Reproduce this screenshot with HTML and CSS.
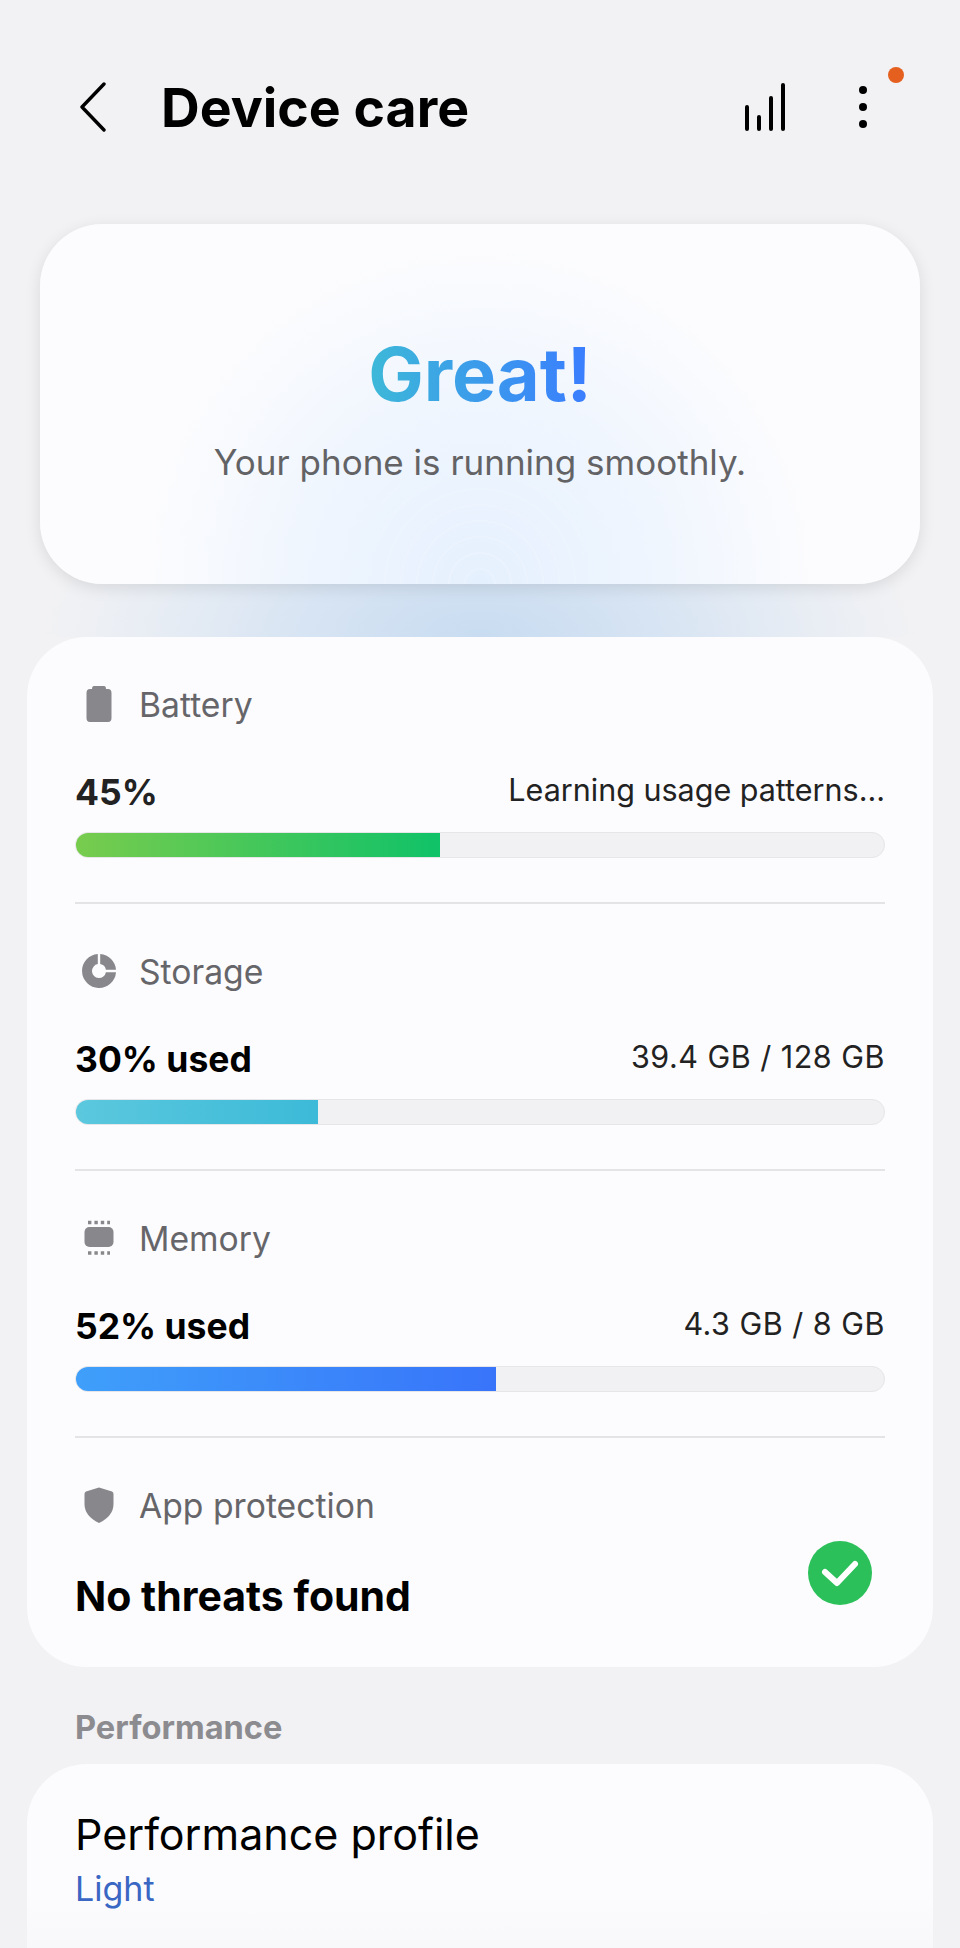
FILE: index.html
```html
<!DOCTYPE html>
<html lang="en">
<head>
  <meta charset="UTF-8" />
  <meta name="viewport" content="width=device-width, initial-scale=1.0"/>
  <title>Device care</title>
  <link rel="stylesheet" href="styles.css">
</head>
<body>

  <header class="top-bar">
    <svg class="back-icon" width="32" height="50" viewBox="0 0 32 50">
      <path d="M25 2 L3 25 L25 48" fill="none" stroke="#000" stroke-width="3.4" stroke-linecap="round" stroke-linejoin="round"/>
    </svg>
    <h1>Device care</h1>
    <svg class="bars-icon" width="40" height="48" viewBox="0 0 40 48">
      <path d="M2 24 V46 M14 34 V46 M26 15 V46 M38 2 V46" fill="none" stroke="#000" stroke-width="4" stroke-linecap="round"/>
    </svg>
    <div class="more-btn">
      <span class="dot"></span><span class="dot"></span><span class="dot"></span>
      <span class="badge"></span>
    </div>
  </header>

  <section class="hero-wrap">
    <div class="hero">
      <div class="great">Great!</div>
      <p>Your phone is running smoothly.</p>
    </div>
  </section>

  <main class="card status-card">

    <section class="row">
      <div class="row-title">
        <span class="row-icon">
          <svg width="26" height="36" viewBox="0 0 26 36"><path d="M8 0 H18 Q20 0 20 3 H22 Q25.5 3 25.5 7 V32 Q25.5 36 22 36 H4 Q0.5 36 0.5 32 V7 Q0.5 3 4 3 H6 Q6 0 8 0 Z" fill="#88888c"/></svg>
        </span>
        Battery
      </div>
      <div class="row-values">
        <strong class="dim">45%</strong>
        <span>Learning usage patterns...</span>
      </div>
      <div class="track"><div class="fill fill-battery" style="width: 45%"></div></div>
    </section>

    <section class="row">
      <div class="row-title">
        <span class="row-icon">
          <svg width="34" height="34" viewBox="0 0 34 34">
            <path d="M15.8 0 A17 17 0 1 0 34 18.2 H23.9 A7 7 0 1 1 15.8 10.1 Z" fill="#88888c"/>
            <path d="M18.2 0 A17 17 0 0 1 34 15.8 H23.9 A7 7 0 0 0 18.2 10.1 Z" fill="#88888c"/>
          </svg>
        </span>
        Storage
      </div>
      <div class="row-values">
        <strong>30% used</strong>
        <span class="amount">39.4 GB / 128 GB</span>
      </div>
      <div class="track"><div class="fill fill-storage" style="width: 30%"></div></div>
    </section>

    <section class="row">
      <div class="row-title">
        <span class="row-icon">
          <svg width="30" height="36" viewBox="0 0 30 36">
            <rect x="0.5" y="7" width="29" height="20" rx="5" fill="#88888c"/>
            <path d="M4 2.5 H26 M4 33 H26" stroke="#88888c" stroke-width="3.4" stroke-dasharray="3.4 3" fill="none"/>
          </svg>
        </span>
        Memory
      </div>
      <div class="row-values">
        <strong>52% used</strong>
        <span class="amount">4.3 GB / 8 GB</span>
      </div>
      <div class="track"><div class="fill fill-memory" style="width: 52%"></div></div>
    </section>

    <section class="row row-last">
      <div class="row-title">
        <span class="row-icon">
          <svg width="30" height="36" viewBox="0 0 30 36"><path d="M15 0.5 L28 4.5 Q29.5 5 29.5 7 V17 Q29.5 29 15 36 Q0.5 29 0.5 17 V7 Q0.5 5 2 4.5 Z" fill="#88888c"/></svg>
        </span>
        App protection
      </div>
      <div class="threats">
        <strong>No threats found</strong>
        <svg class="check" width="64" height="64" viewBox="0 0 64 64">
          <circle cx="32" cy="32" r="32" fill="#2bc05a"/>
          <path d="M17 31 L29 42 L47 23" fill="none" stroke="#fff" stroke-width="6" stroke-linecap="round" stroke-linejoin="round"/>
        </svg>
      </div>
    </section>

  </main>

  <h2 class="section-label">Performance</h2>

  <section class="card profile-card">
    <div class="profile-name">Performance profile</div>
    <div class="profile-value">Light</div>
  </section>

</body>
</html>
```

FILE: styles.css
```css
html, body {
  height: 1948px;
  overflow: hidden;
}

body {
  margin: 0;
  font-family: Inter, "Open Sans", sans-serif;
  background: #f2f2f4;
  color: #000;
}

.top-bar {
  display: flex;
  align-items: center;
  height: 122px;
  padding: 46px 65px 0 79px;
}

.back-icon {
  flex: none;
}

.top-bar h1 {
  flex: 1;
  margin: 0 0 0 50px;
  font-size: 53.6px;
  font-weight: 700;
}

.bars-icon {
  flex: none;
  margin-right: 74px;
}

.more-btn {
  display: flex;
  flex-direction: column;
  gap: 9px;
  width: 36px;
  position: relative;
}

.dot {
  width: 8px;
  height: 8px;
  border-radius: 50%;
  background: #000;
}

.badge {
  position: absolute;
  top: -19px;
  left: 29px;
  width: 16px;
  height: 16px;
  border-radius: 50%;
  background: #e5601e;
}

.hero-wrap {
  padding: 56px 40px 53px;
  background:
    radial-gradient(ellipse 440px 200px at 50% 100%, #c8dcf1 0%, #d7e4f3 40%, #e8edf4 75%, #f2f2f4 100%);
}

.hero {
  height: 360px;
  box-sizing: border-box;
  padding-top: 114px;
  border-radius: 62px;
  text-align: center;
  background:
    repeating-radial-gradient(circle at 50% 100%, rgba(255, 255, 255, 0) 0 14px, rgba(255, 255, 255, 0.12) 14px 16px) center bottom / 200px 100px no-repeat,
    radial-gradient(ellipse 340px 340px at 50% 100%, #e5f0fe 0%, #f0f6fe 55%, #fcfcfe 100%);
  box-shadow: 0 4px 16px rgba(0, 0, 0, 0.1);
}

.great {
  font-size: 74px;
  font-weight: 700;
  line-height: 72px;
  display: inline-block;
  background: linear-gradient(to right, #3db9d8, #3a7cff);
  -webkit-background-clip: text;
  background-clip: text;
  color: transparent;
}

.hero p {
  margin: 30px 0 0;
  font-size: 35px;
  line-height: 44px;
  color: #636366;
}

.card {
  background: #fcfcfe;
  border-radius: 60px;
  margin: 0 27px;
}

.status-card {
  padding: 0 48px;
}

.row {
  height: 267px;
  box-sizing: border-box;
  padding-top: 45px;
  border-bottom: 2px solid #e4e4e6;
}

.row-last {
  height: 229px;
  border-bottom: 0;
}

.row-title {
  display: flex;
  align-items: center;
  height: 44px;
  font-size: 33.7px;
  color: #66666a;
}

.row-icon {
  display: flex;
  justify-content: center;
  width: 48px;
  margin-right: 16px;
}

.row-values {
  display: flex;
  justify-content: space-between;
  align-items: center;
  height: 44px;
  margin-top: 44px;
  font-size: 30.5px;
  color: #222;
}

.row-values span {
  margin-bottom: 6px;
}

.row-values .amount {
  letter-spacing: 0.5px;
}

.row-values strong {
  font-size: 35.5px;
  font-weight: 700;
  color: #000;
}

.row-values strong.dim {
  color: #222;
}

.track {
  height: 26px;
  margin-top: 18px;
  border-radius: 13px;
  background: #f1f1f3;
  border: 1px solid #e6e6e8;
  box-sizing: border-box;
  overflow: hidden;
}

.fill {
  height: 100%;
}

.fill-battery {
  background: linear-gradient(to right, #78cc4d, #10c268);
}

.fill-storage {
  background: linear-gradient(to right, #5bc8de, #3cbad8);
}

.fill-memory {
  background: linear-gradient(to right, #3f9ffa, #3874fa);
}

.threats {
  display: flex;
  justify-content: space-between;
  align-items: flex-start;
  padding-right: 13px;
  margin-top: 14px;
}

.threats strong {
  margin-top: 30px;
  font-size: 41px;
  font-weight: 700;
}

.section-label {
  margin: 40px 75px 0;
  font-size: 32.6px;
  font-weight: 700;
  line-height: 40px;
  color: #8c8c90;
}

.profile-card {
  height: 184px;
  box-sizing: border-box;
  margin-top: 17px;
  padding: 39px 48px 0;
  border-radius: 60px 60px 0 0;
  background: linear-gradient(to bottom, #fcfcfe 70%, #f8f8fa 100%);
}

.profile-name {
  font-size: 43px;
  line-height: 62px;
}

.profile-value {
  font-size: 34px;
  line-height: 48px;
  color: #3a66c4;
}
```
